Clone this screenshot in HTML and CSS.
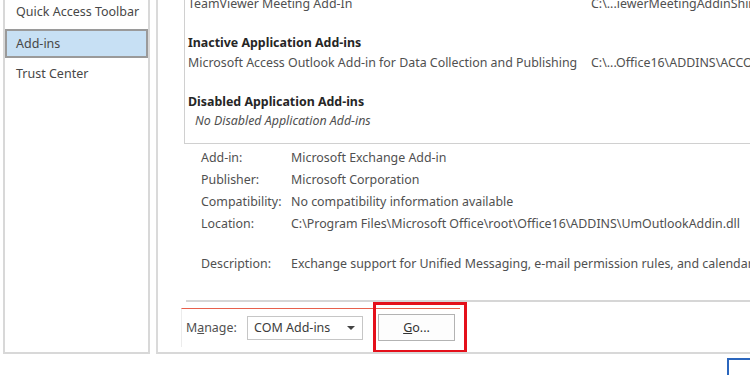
FILE: index.html
```html
<!DOCTYPE html>
<html>
<head>
<meta charset="utf-8">
<link rel="stylesheet" href="styles.css">
</head>
<body>
<div class="page">
  <div class="panels">
    <nav class="nav">
      <div class="nav-item nav-first">Quick Access Toolbar</div>
      <div class="nav-item nav-active">Add-ins</div>
      <div class="nav-item">Trust Center</div>
    </nav>
    <main class="content">
      <div class="list">
        <div class="row"><span class="name">TeamViewer Meeting Add-In</span><span class="loc">C:\...iewerMeetingAddinShim64.dll</span></div>
        <div class="row"></div>
        <div class="row head">Inactive Application Add-ins</div>
        <div class="row"><span class="name">Microsoft Access Outlook Add-in for Data Collection and Publishing</span><span class="loc">C:\...Office16\ADDINS\ACCOLK.DLL</span></div>
        <div class="row"></div>
        <div class="row head">Disabled Application Add-ins</div>
        <div class="row empty">No Disabled Application Add-ins</div>
      </div>
      <div class="details">
        <div class="label">Add-in:</div><div class="value">Microsoft Exchange Add-in</div>
        <div class="label">Publisher:</div><div class="value">Microsoft Corporation</div>
        <div class="label">Compatibility:</div><div class="value">No compatibility information available</div>
        <div class="label">Location:</div><div class="value">C:\Program Files\Microsoft Office\root\Office16\ADDINS\UmOutlookAddin.dll</div>
        <div class="label desc">Description:</div><div class="value desc">Exchange support for Unified Messaging, e-mail permission rules, and calendar availability.</div>
      </div>
      <div class="manage-area">
        <div class="manage">
          <span class="manage-label">M<u>a</u>nage:</span>
          <div class="select"><span>COM Add-ins</span><span class="caret"></span></div>
          <button class="go"><u>G</u>o...</button>
          <div class="highlight"></div>
        </div>
      </div>
    </main>
  </div>
  <div class="footer">
    <button class="ok"></button>
  </div>
</div>
</body>
</html>
```

FILE: styles.css
```css
html, body {
  margin: 0;
  padding: 0;
  background: #ffffff;
  overflow: hidden;
}
body {
  width: 750px;
  height: 375px;
  font-family: "Noto Sans", "Open Sans", sans-serif;
  font-size: 12.4px;
  color: #505050;
}
.page {
  display: flex;
  flex-direction: column;
  width: 750px;
  height: 375px;
  overflow: hidden;
}
.panels {
  display: flex;
  padding-left: 3px;
  gap: 6px;
  height: 354px;
  flex: none;
}
.nav {
  width: 143px;
  flex: none;
  border: 2px solid #d8d8d8;
  border-top: none;
  display: flex;
  flex-direction: column;
}
.nav-item {
  height: 30px;
  line-height: 28px;
  padding-left: 9px;
  color: #474747;
  font-size: 12.5px;
  box-sizing: border-box;
  border: 2px solid transparent;
  flex: none;
}
.nav-first {
  height: 28px;
  line-height: 20px;
}
.nav-active {
  background: #c7e0f4;
  border-color: #9a9a9a;
  height: 29px;
  line-height: 25px;
  margin-top: 1px;
}
.content {
  width: 640px;
  height: 354px;
  flex: none;
  border-left: 2px solid #dadada;
  border-bottom: 2px solid #d8d8d8;
  display: flex;
  flex-direction: column;
  padding-left: 26px;
  box-sizing: border-box;
  overflow: hidden;
}
.content > * {
  flex: none;
}
.list {
  border-left: 1px solid #d0d0d0;
  border-bottom: 1px solid #d0d0d0;
  padding: 0 0 12px 3px;
  margin-top: -6px;
}
.row {
  height: 19.5px;
  line-height: 19.5px;
  display: flex;
  white-space: nowrap;
}
.row .name {
  width: 403px;
  flex: none;
}
.row.head {
  font-weight: bold;
  color: #262626;
}
.row.empty {
  font-style: italic;
  padding-left: 7px;
}
.details {
  display: grid;
  grid-template-columns: 90px auto;
  grid-template-rows: 22px 22px 22px 22px 40px;
  align-items: center;
  line-height: 22px;
  padding: 3px 0 0 17px;
  white-space: nowrap;
}
.details .desc {
  align-self: end;
}
.manage-area {
  margin-top: 25px;
  border-top: 2px solid #d6d6d6;
  margin-left: 2px;
  padding-top: 6px;
}
.manage {
  position: relative;
  margin-left: -5px;
  width: 279px;
  height: 39px;
  border-top: 1px solid #e8604c;
  border-left: 1px solid #ececec;
  display: flex;
  align-items: center;
  padding-left: 4px;
  box-sizing: border-box;
}
.manage-label {
  width: 61px;
  flex: none;
}
.manage-label u, .go u {
  text-decoration: underline;
}
.select {
  width: 116px;
  height: 24px;
  box-sizing: border-box;
  border: 1px solid #c6c6c6;
  display: flex;
  align-items: center;
  justify-content: space-between;
  padding: 0 7px 0 6px;
  color: #3c3c3c;
  font-size: 12.5px;
}
.caret {
  width: 0;
  height: 0;
  border-left: 4px solid transparent;
  border-right: 4px solid transparent;
  border-top: 4px solid #444444;
}
.go {
  margin-left: 15px;
  width: 77px;
  height: 27px;
  border: 1px solid #b3b3b3;
  background: #fdfdfd;
  font-family: inherit;
  font-size: 12.5px;
  color: #333333;
  padding: 0;
}
.highlight {
  position: absolute;
  left: 191px;
  top: -7px;
  width: 94px;
  height: 51px;
  box-sizing: border-box;
  border: 3px solid #e4101b;
}
.footer {
  display: flex;
  padding: 4px 0 0 727px;
}
.ok {
  width: 80px;
  height: 30px;
  flex: none;
  border: 2px solid #2b66bd;
  background: #ffffff;
  padding: 0;
}
```
